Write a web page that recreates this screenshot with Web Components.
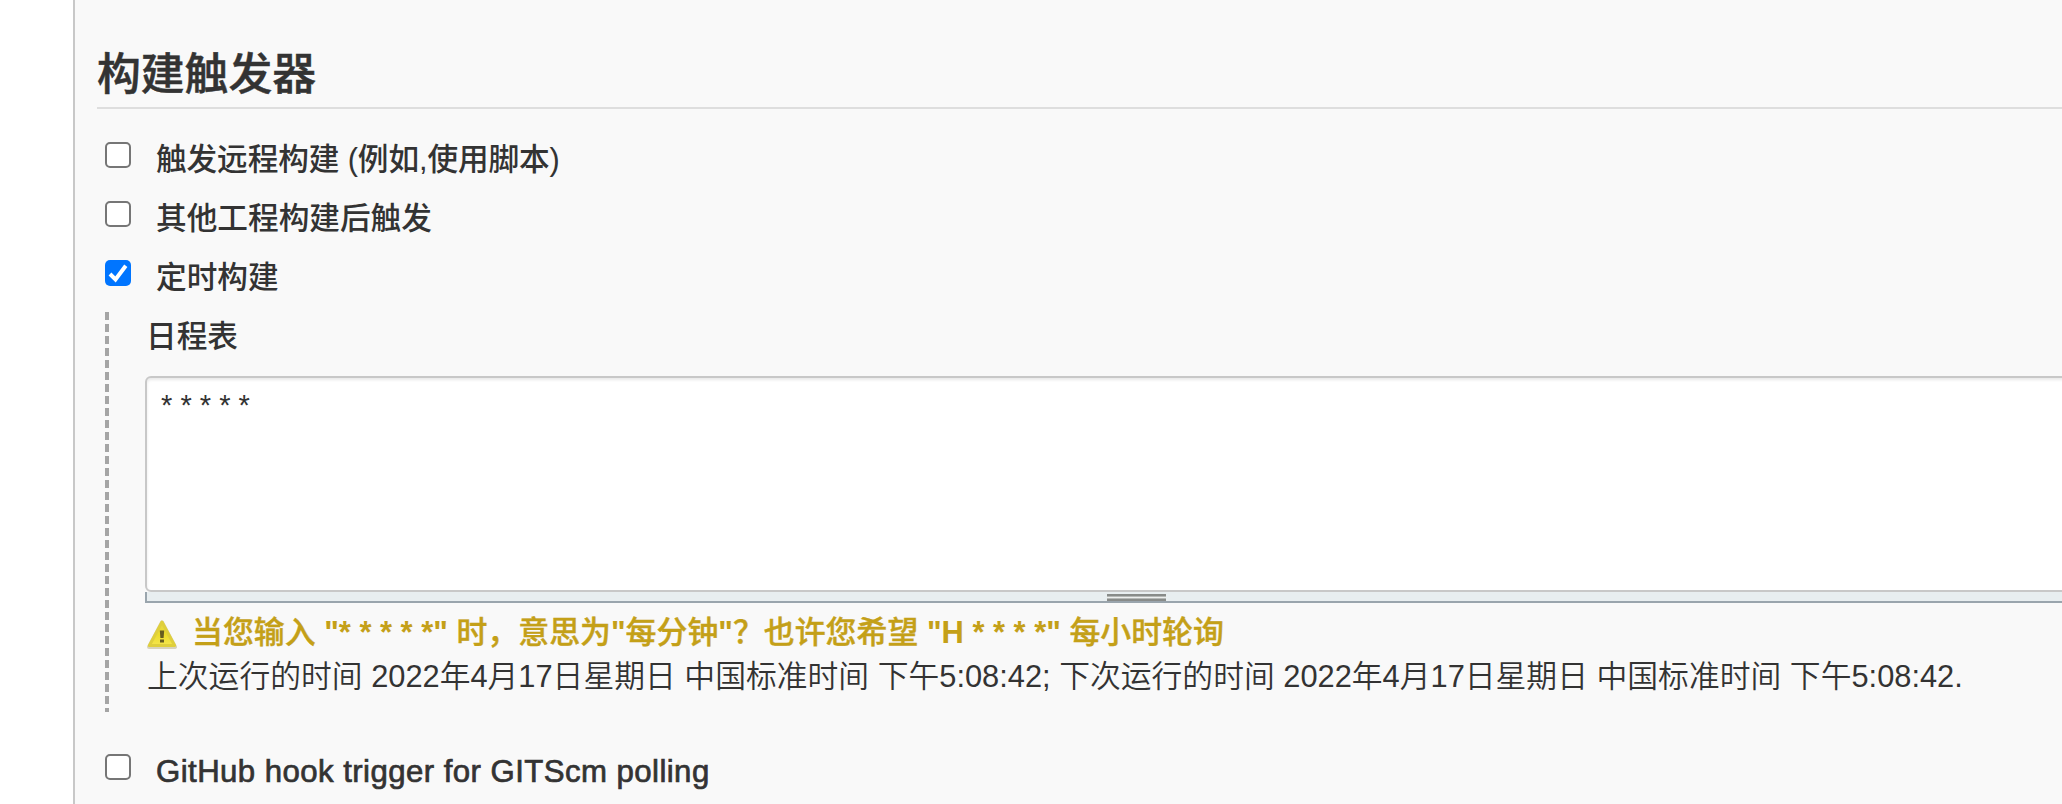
<!DOCTYPE html>
<html lang="zh-CN">
<head>
<meta charset="utf-8">
<title>构建触发器</title>
<style>
html,body{margin:0;height:804px;overflow:hidden;background:#fff}
body{font-family:"Liberation Sans","Noto Sans CJK SC",sans-serif;color:#333}
b{-webkit-text-stroke:0}
</style>
</head>
<body>
<config-panel>
  <section-title>构建触发器</section-title>
  <trigger-option>触发远程构建 (例如,使用脚本)</trigger-option>
  <trigger-option>其他工程构建后触发</trigger-option>
  <trigger-option checked>定时构建</trigger-option>
  <option-body>
    <field-label>日程表</field-label>
    <schedule-box>* * * * *</schedule-box>
    <warning-line>当您输入 <b>"* * * * *"</b> 时，意思为<b>"</b>每分钟<b>"</b>？也许您希望 <b>"H * * * *"</b> 每小时轮询</warning-line>
    <info-line>上次运行的时间 2022年4月17日星期日 中国标准时间 下午5:08:42; 下次运行的时间 2022年4月17日星期日 中国标准时间 下午5:08:42.</info-line>
  </option-body>
  <trigger-option latin>GitHub hook trigger for GITScm polling</trigger-option>
</config-panel>
<script>
const define = (name, html) => customElements.define(name, class extends HTMLElement {
  constructor() {
    super();
    this.attachShadow({ mode: 'open' }).innerHTML = html;
  }
});

define('config-panel', `<style>
:host{display:block;box-sizing:border-box;height:804px;margin-left:73px;border-left:2px solid #c8c8c8;background:#f9f9f9;padding:38px 0 0 22px;overflow:hidden}
</style><slot></slot>`);

define('section-title', `<style>
:host{display:block;box-sizing:border-box;height:71px;border-bottom:2px solid #dedede;font-size:43.8px;line-height:73px;font-weight:500;-webkit-text-stroke:.5px #333;margin-bottom:20px}
</style><slot></slot>`);

define('trigger-option', `<style>
:host{display:flex;height:59px;padding-left:8px;font-size:30.67px;line-height:61px;font-weight:500;white-space:nowrap}
:host(:first-of-type){letter-spacing:-.1px}
:host([latin]){font-size:31.2px;letter-spacing:.43px;-webkit-text-stroke:.7px #333}
.box{box-sizing:border-box;flex:none;width:26px;height:26px;margin:13px 25px 0 0;border:2px solid #767676;border-radius:5px;background:#fff}
svg{display:none}
:host([checked]) .box{border:0;background:#0075ff}
:host([checked]) svg{display:block}
</style><span class="box"><svg width="26" height="26" viewBox="0 0 26 26"><path d="M5 14l5.500 5.400L20.800 5.800" fill="none" stroke="#fff" stroke-width="4"/></svg></span><span><slot></slot></span>`);

define('option-body', `<style>
:host{display:flex;height:400px;margin:6px 0 29px 8px}
.rail{flex:none;width:4px;background:repeating-linear-gradient(#a5a5a5 0 8px,transparent 8px 12px)}
.body{flex:1;min-width:0;padding-left:36px}
</style><div class="rail"></div><div class="body"><slot></slot></div>`);

define('field-label', `<style>
:host{display:block;height:64px;padding-left:1px;font-size:30.67px;line-height:48px;font-weight:500}
</style><slot></slot>`);

define('schedule-box', `<style>
:host{display:block;height:227px}
.area{box-sizing:border-box;height:216px;margin-right:-10px;border:2px solid #c8c8c8;border-radius:6px;background:#fff;box-shadow:inset 0 2px 3px rgba(0,0,0,.09);padding:10px 14px;font-size:29.1px;line-height:34px}
.grip{box-sizing:border-box;height:11px;border:solid #9aa5ad;border-width:0 0 2px 2px;background:#e8eef0;padding:2px 0 0 960px}
.handle{width:59px;height:7px;background:linear-gradient(#888b89 0 2px,#b5b8b6 2px 3px,#eceeed 3px 4px,#b5b8b6 4px 5px,#888b89 5px 7px)}
</style><div class="area"><slot></slot></div><div class="grip"><div class="handle"></div></div>`);

define('warning-line', `<style>
:host{display:flex;height:50px;padding:7px 0 0 1px;font-size:30.9px;line-height:46px;font-weight:500;-webkit-text-stroke:.4px #c4a018;color:#c4a018;white-space:nowrap}
svg{flex:none;margin:8px 14px 0 0}
</style><svg width="32" height="34" viewBox="0 0 32 34"><defs><linearGradient id="g" x2="0" y2="1"><stop stop-color="#e5d64c"/><stop offset=".55" stop-color="#ecdc2b"/><stop offset="1" stop-color="#f5e64e"/></linearGradient></defs><path d="M16 4.500L29 29H3z" fill="#a99d60" stroke="#a99d60" stroke-width="4" stroke-linejoin="round" opacity=".4"/><path d="M16 4L28.600 27.500H3.400z" fill="url(#g)" stroke="#dfcf3c" stroke-width="3" stroke-linejoin="round"/><path d="M13.800 12.500h4.400l-.6 7.500h-3.200zM14 21.500h4v3h-4z" fill="#665d20"/></svg><span><slot></slot></span>`);

define('info-line', `<style>
:host{display:block;height:46px;margin-top:-6px;padding-left:2px;font-size:30.8px;line-height:46px;font-weight:350;white-space:nowrap}
</style><slot></slot>`);
</script>
</body>
</html>
